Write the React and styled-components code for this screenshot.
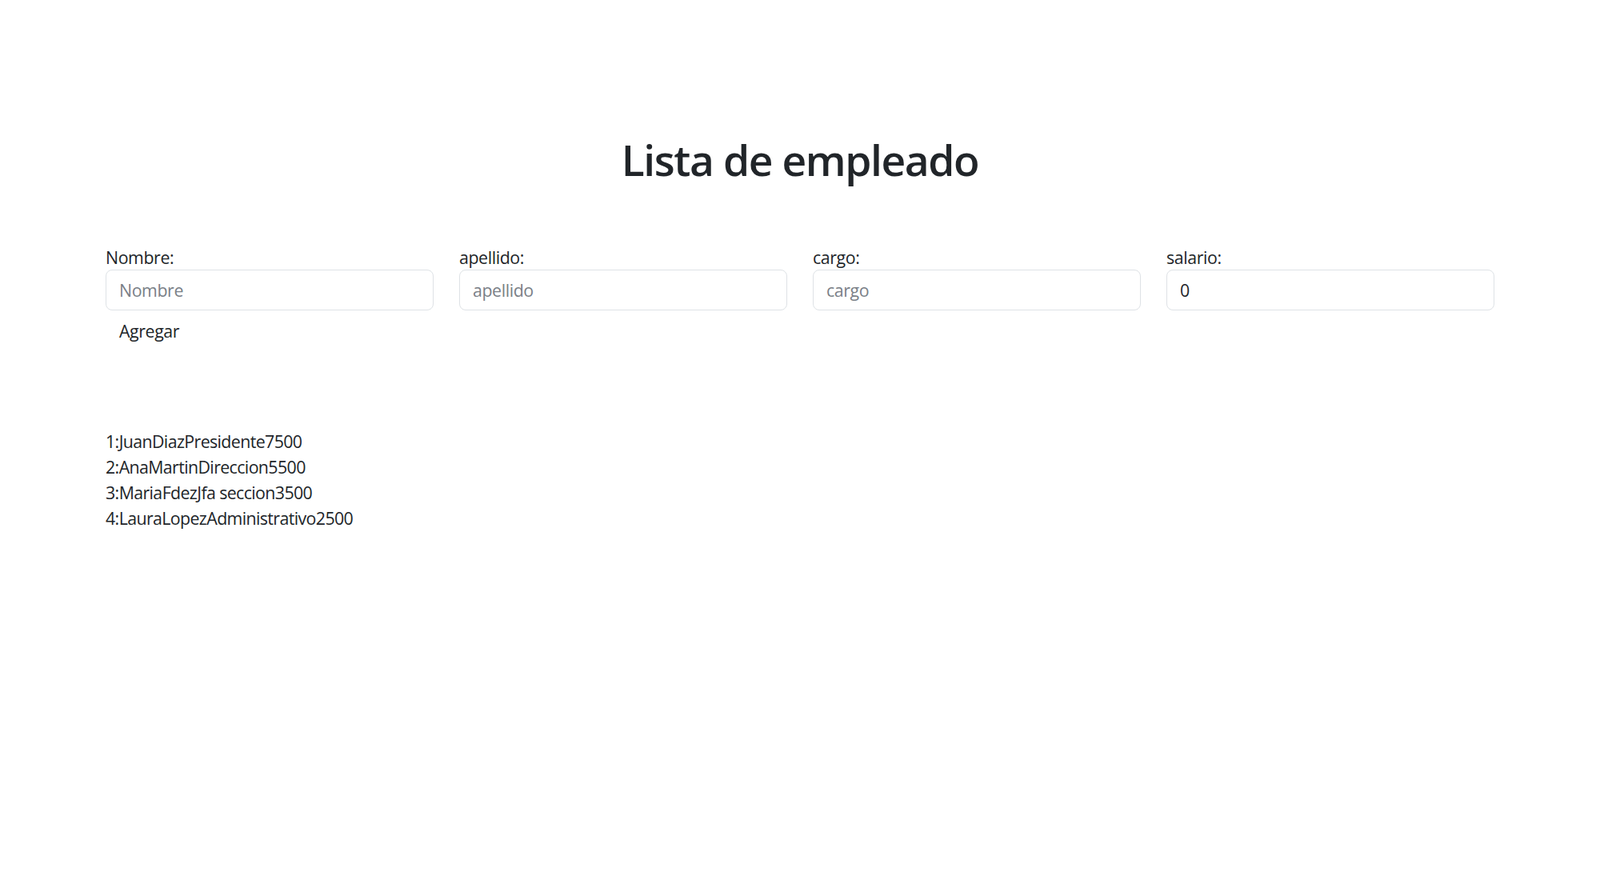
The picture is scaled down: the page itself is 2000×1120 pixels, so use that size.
import React from "react";
import styled, { createGlobalStyle } from "styled-components";

const Global = createGlobalStyle`
  html, body { margin: 0; padding: 0; background: #fff; }
  body {
    font-family: "Open Sans", "Noto Sans", "Liberation Sans", sans-serif;
    color: #212529;
    font-size: 21.33px;
    line-height: 1.5;
  }
  * { box-sizing: border-box; }
`;

const Container = styled.div`
  width: 1768px;
  margin: 0 auto;
  padding: 168px 16px 0;
`;

const Title = styled.h1`
  margin: 0 0 73px;
  text-align: center;
  font-size: 53.3px;
  font-weight: 600;
  line-height: 64px;
  letter-spacing: -1.4px;
`;

const FieldRow = styled.div`
  display: grid;
  grid-template-columns: repeat(4, 1fr);
  column-gap: 32px;
`;

const Field = styled.div`
  display: flex;
  flex-direction: column;
`;

const Label = styled.label`
  font-size: 21.33px;
  line-height: 32px;
  padding-top: 1px;
  margin-bottom: -1px;
  letter-spacing: -0.4px;
`;

const Input = styled.input`
  display: block;
  width: 100%;
  height: 51px;
  padding: 8px 16px;
  font-family: inherit;
  font-size: 21.33px;
  line-height: 32px;
  color: #212529;
  background: #fff;
  border: 1.3px solid #dee2e6;
  border-radius: 8px;
  outline: none;
  letter-spacing: -0.4px;
  &::placeholder { color: #7a8087; }
`;

const Button = styled.button`
  display: block;
  margin-top: 0;
  height: 51px;
  padding: 8px 16px;
  background: transparent;
  border: 1px solid transparent;
  border-radius: 8px;
  font-family: inherit;
  font-size: 21.33px;
  line-height: 32px;
  color: #212529;
  cursor: pointer;
  letter-spacing: -0.4px;
`;

const List = styled.div`
  margin-top: 97px;
  font-size: 21.33px;
  line-height: 32px;
  letter-spacing: -0.6px;
`;

const Item = styled.div``;

const fields = [
  { label: "Nombre:", placeholder: "Nombre" },
  { label: "apellido:", placeholder: "apellido" },
  { label: "cargo:", placeholder: "cargo" },
  { label: "salario:", value: "0" },
];

const empleados = [
  { id: 1, nombre: "Juan", apellido: "Diaz", cargo: "Presidente", salario: 7500 },
  { id: 2, nombre: "Ana", apellido: "Martin", cargo: "Direccion", salario: 5500 },
  { id: 3, nombre: "Maria", apellido: "Fdez", cargo: "Jfa seccion", salario: 3500 },
  { id: 4, nombre: "Laura", apellido: "Lopez", cargo: "Administrativo", salario: 2500 },
];

export default function App() {
  return (
    <>
      <Global />
      <Container>
        <Title>Lista de empleado</Title>
        <FieldRow>
          {fields.map((f) => (
            <Field key={f.label}>
              <Label>{f.label}</Label>
              {f.value !== undefined ? (
                <Input defaultValue={f.value} />
              ) : (
                <Input placeholder={f.placeholder} />
              )}
            </Field>
          ))}
        </FieldRow>
        <Button>Agregar</Button>
        <List>
          {empleados.map((e) => (
            <Item key={e.id}>
              {e.id}:{e.nombre}
              {e.apellido}
              {e.cargo}
              {e.salario}
            </Item>
          ))}
        </List>
      </Container>
    </>
  );
}
